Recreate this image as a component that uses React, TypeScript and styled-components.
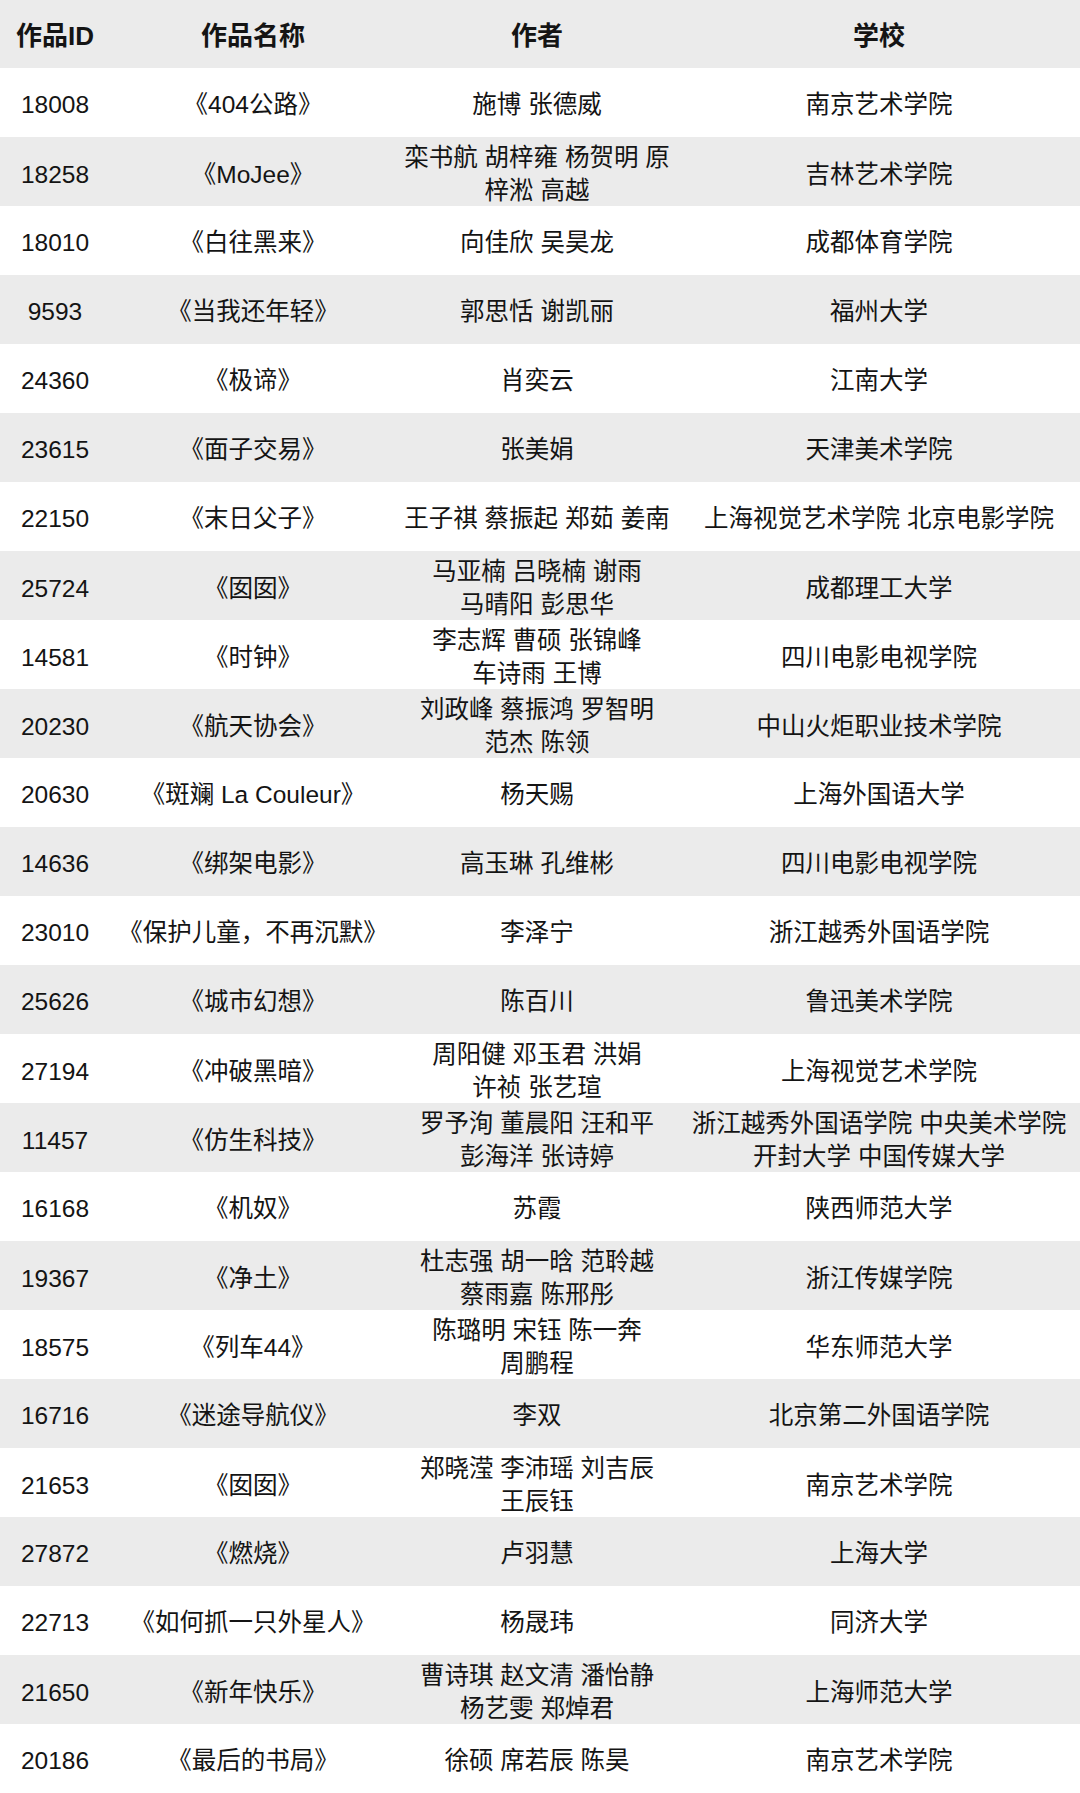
import React from "react";
import styled, { createGlobalStyle } from "styled-components";

const GlobalStyle = createGlobalStyle`
  html, body {
    margin: 0;
    padding: 0;
    background: #ffffff;
  }
  body {
    font-family: "Liberation Sans", "Noto Sans CJK SC", sans-serif;
    color: #141414;
  }
`;

const Table = styled.div`
  width: 1080px;
  display: flex;
  flex-direction: column;
`;

const Row = styled.div<{ $shade: boolean; $header?: boolean }>`
  display: grid;
  grid-template-columns: 110px 286px 282px 1fr;
  height: ${(p) => (p.$header ? "68px" : "69px")};
  background: ${(p) => (p.$shade ? "#ebebeb" : "#ffffff")};
`;

const Cell = styled.div<{ $header?: boolean }>`
  box-sizing: border-box;
  padding-top: 4px;
  display: flex;
  flex-direction: column;
  align-items: center;
  justify-content: center;
  text-align: center;
  font-size: ${(p) => (p.$header ? "26px" : "24.5px")};
  font-weight: ${(p) => (p.$header ? 700 : 400)};
  line-height: 33px;
  white-space: nowrap;
`;

const Line = styled.span`
  display: block;
`;

type Item = { id: string; title: string; authors: string[]; schools: string[] };

const data: Item[] = [
  { id: "18008", title: "《404公路》", authors: ["施博 张德威"], schools: ["南京艺术学院"] },
  { id: "18258", title: "《MoJee》", authors: ["栾书航 胡梓雍 杨贺明 原", "梓淞 高越"], schools: ["吉林艺术学院"] },
  { id: "18010", title: "《白往黑来》", authors: ["向佳欣 吴昊龙"], schools: ["成都体育学院"] },
  { id: "9593", title: "《当我还年轻》", authors: ["郭思恬 谢凯丽"], schools: ["福州大学"] },
  { id: "24360", title: "《极谛》", authors: ["肖奕云"], schools: ["江南大学"] },
  { id: "23615", title: "《面子交易》", authors: ["张美娟"], schools: ["天津美术学院"] },
  { id: "22150", title: "《末日父子》", authors: ["王子祺 蔡振起 郑茹 姜南"], schools: ["上海视觉艺术学院 北京电影学院"] },
  { id: "25724", title: "《囡囡》", authors: ["马亚楠 吕晓楠 谢雨", "马晴阳 彭思华"], schools: ["成都理工大学"] },
  { id: "14581", title: "《时钟》", authors: ["李志辉 曹硕 张锦峰", "车诗雨 王博"], schools: ["四川电影电视学院"] },
  { id: "20230", title: "《航天协会》", authors: ["刘政峰 蔡振鸿 罗智明", "范杰 陈领"], schools: ["中山火炬职业技术学院"] },
  { id: "20630", title: "《斑斓 La Couleur》", authors: ["杨天赐"], schools: ["上海外国语大学"] },
  { id: "14636", title: "《绑架电影》", authors: ["高玉琳 孔维彬"], schools: ["四川电影电视学院"] },
  { id: "23010", title: "《保护儿童，不再沉默》", authors: ["李泽宁"], schools: ["浙江越秀外国语学院"] },
  { id: "25626", title: "《城市幻想》", authors: ["陈百川"], schools: ["鲁迅美术学院"] },
  { id: "27194", title: "《冲破黑暗》", authors: ["周阳健 邓玉君 洪娟", "许祯 张艺瑄"], schools: ["上海视觉艺术学院"] },
  { id: "11457", title: "《仿生科技》", authors: ["罗予洵 董晨阳 汪和平", "彭海洋 张诗婷"], schools: ["浙江越秀外国语学院 中央美术学院", "开封大学 中国传媒大学"] },
  { id: "16168", title: "《机奴》", authors: ["苏霞"], schools: ["陕西师范大学"] },
  { id: "19367", title: "《净土》", authors: ["杜志强 胡一晗 范聆越", "蔡雨嘉 陈邢彤"], schools: ["浙江传媒学院"] },
  { id: "18575", title: "《列车44》", authors: ["陈璐明 宋钰 陈一奔", "周鹏程"], schools: ["华东师范大学"] },
  { id: "16716", title: "《迷途导航仪》", authors: ["李双"], schools: ["北京第二外国语学院"] },
  { id: "21653", title: "《囡囡》", authors: ["郑晓滢 李沛瑶 刘吉辰", "王辰钰"], schools: ["南京艺术学院"] },
  { id: "27872", title: "《燃烧》", authors: ["卢羽慧"], schools: ["上海大学"] },
  { id: "22713", title: "《如何抓一只外星人》", authors: ["杨晟玮"], schools: ["同济大学"] },
  { id: "21650", title: "《新年快乐》", authors: ["曹诗琪 赵文清 潘怡静", "杨艺雯 郑焯君"], schools: ["上海师范大学"] },
  { id: "20186", title: "《最后的书局》", authors: ["徐硕 席若辰 陈昊"], schools: ["南京艺术学院"] },
];

const Lines: React.FC<{ lines: string[] }> = ({ lines }) => (
  <>
    {lines.map((l, i) => (
      <Line key={i}>{l}</Line>
    ))}
  </>
);

export default function App() {
  return (
    <>
      <GlobalStyle />
      <Table>
        <Row $shade $header>
          <Cell $header>作品ID</Cell>
          <Cell $header>作品名称</Cell>
          <Cell $header>作者</Cell>
          <Cell $header>学校</Cell>
        </Row>
        {data.map((d, i) => (
          <Row key={d.id + i} $shade={i % 2 === 1}>
            <Cell>{d.id}</Cell>
            <Cell>{d.title}</Cell>
            <Cell>
              <Lines lines={d.authors} />
            </Cell>
            <Cell>
              <Lines lines={d.schools} />
            </Cell>
          </Row>
        ))}
      </Table>
    </>
  );
}
